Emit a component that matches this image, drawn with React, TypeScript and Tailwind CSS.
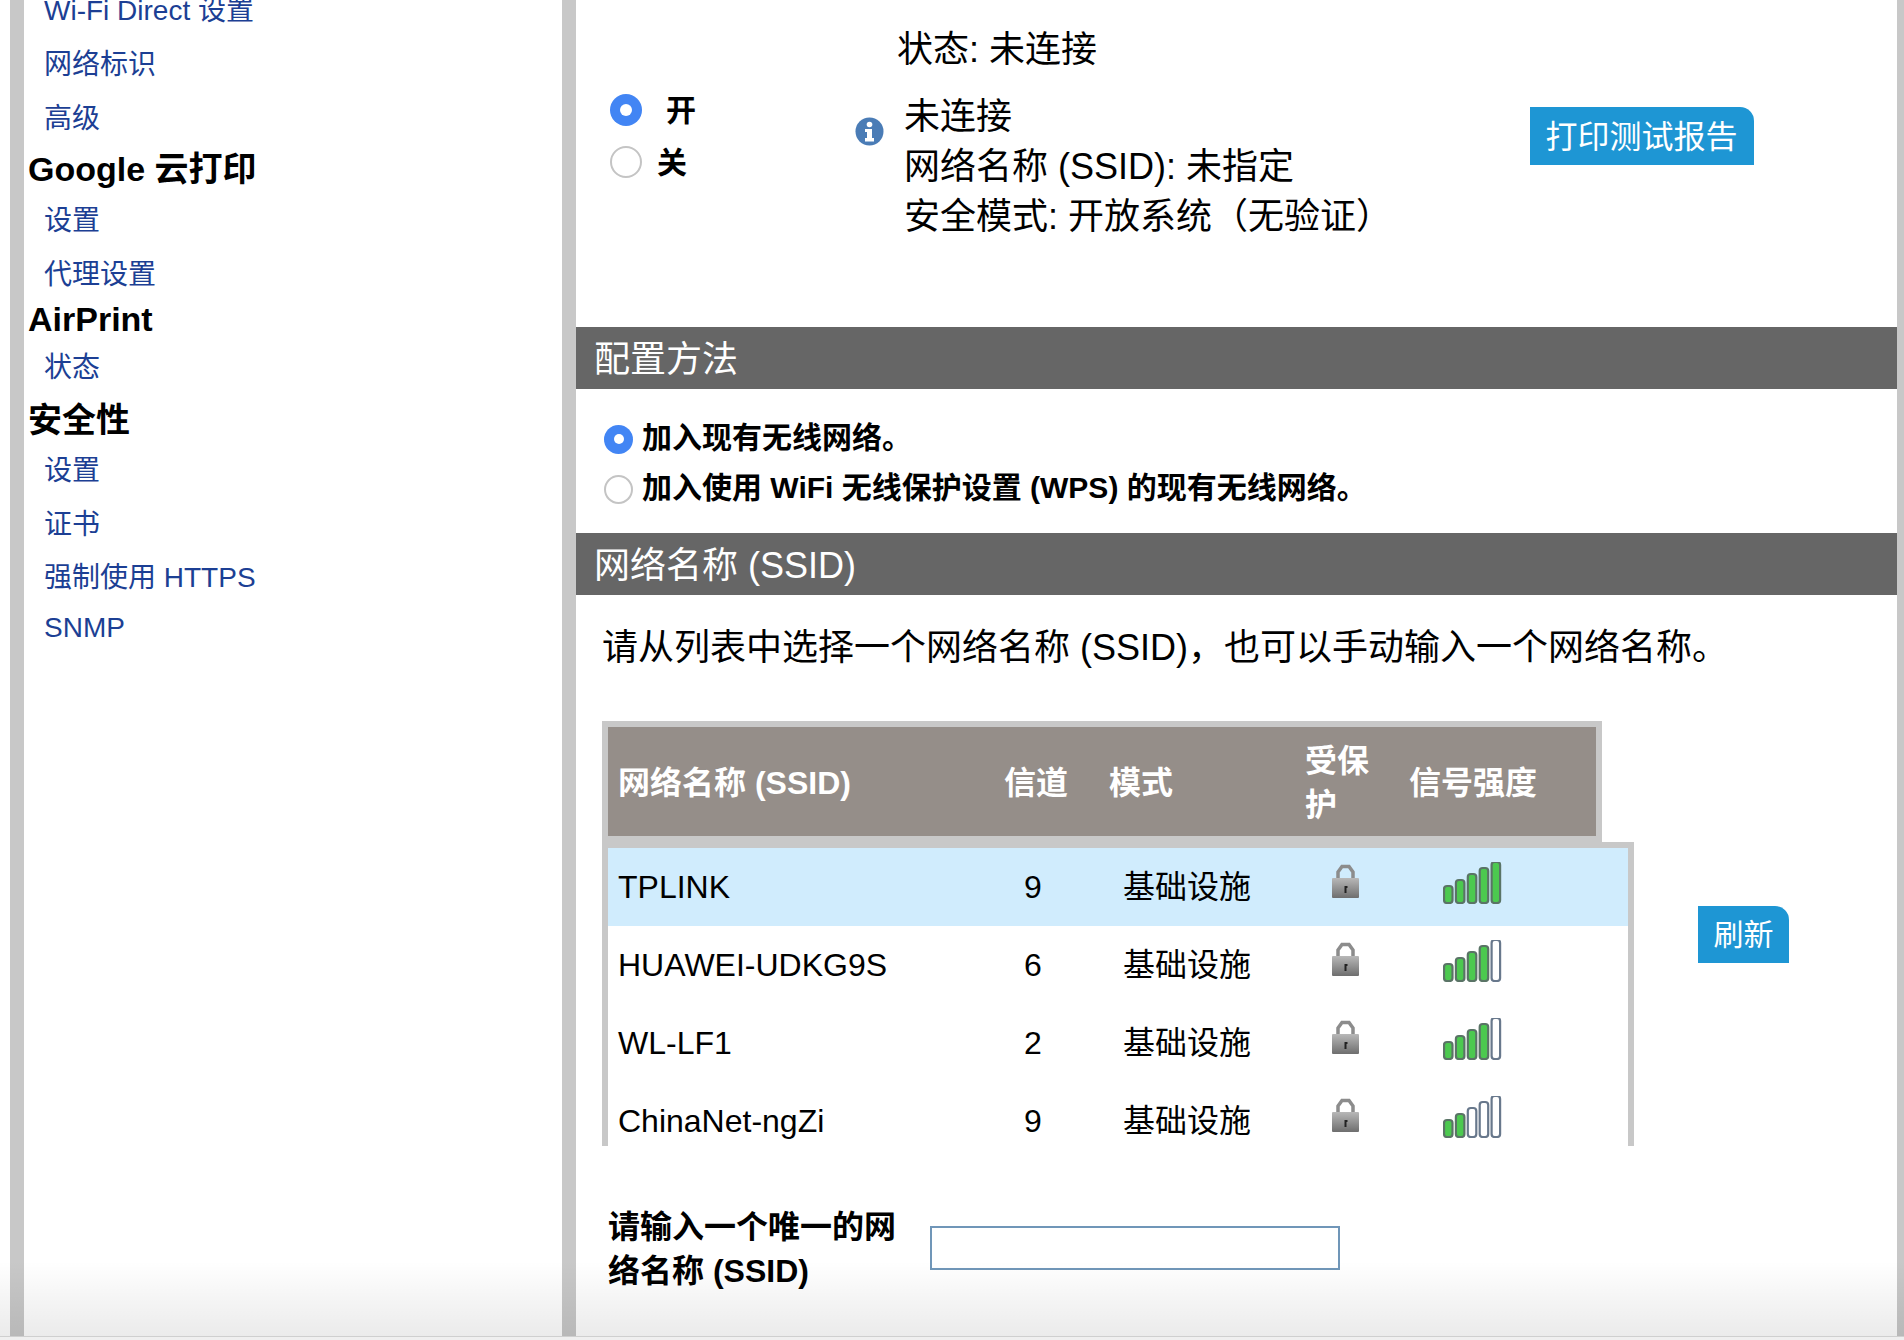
import type { ReactNode } from "react";

const sidebarRows: { label: string; kind: "link" | "head"; h: string }[] = [
  { label: "Wi-Fi Direct 设置", kind: "link", h: "h-[54px]" },
  { label: "网络标识", kind: "link", h: "h-[54px]" },
  { label: "高级", kind: "link", h: "h-[54px]" },
  { label: "Google 云打印", kind: "head", h: "h-[48px] pb-[2px]" },
  { label: "设置", kind: "link", h: "h-[54px]" },
  { label: "代理设置", kind: "link", h: "h-[53px]" },
  { label: "AirPrint", kind: "head", h: "h-[38px] pb-[2px]" },
  { label: "状态", kind: "link", h: "h-[58px]" },
  { label: "安全性", kind: "head", h: "h-[47px]" },
  { label: "设置", kind: "link", h: "h-[54px]" },
  { label: "证书", kind: "link", h: "h-[53px]" },
  { label: "强制使用 HTTPS", kind: "link", h: "h-[54px]" },
  { label: "SNMP", kind: "link", h: "h-[46px]" },
];

const networks = [
  { ssid: "TPLINK", channel: 9, level: 5 },
  { ssid: "HUAWEI-UDKG9S", channel: 6, level: 4 },
  { ssid: "WL-LF1", channel: 2, level: 4 },
  { ssid: "ChinaNet-ngZi", channel: 9, level: 2 },
];

function Radio({ on, size, dot }: { on: boolean; size: string; dot?: string }) {
  if (on) {
    return (
      <span className={`flex shrink-0 items-center justify-center rounded-full bg-[#4285f4] ${size}`}>
        <span className={`rounded-full bg-white ${dot ?? "h-[12px] w-[12px]"}`} />
      </span>
    );
  }
  return <span className={`block shrink-0 rounded-full border-2 border-[#c4c4c4] bg-white ${size}`} />;
}

function SectionBar({ children }: { children: ReactNode }) {
  return (
    <div className="flex h-[62px] items-center bg-[#666666] pl-[18px] pt-[3px] text-[36px] text-white">
      {children}
    </div>
  );
}

function InfoIcon() {
  return (
    <svg width="29" height="29" viewBox="0 0 29 29" className="mt-[25px] shrink-0">
      <circle cx="14.5" cy="14.5" r="14" fill="#4a7cb6" />
      <circle cx="14.5" cy="7.5" r="2.8" fill="#fff" />
      <path d="M10 12h7v9h2v3.500h-9V21h2v-6h-2z" fill="#fff" />
    </svg>
  );
}

function LockIcon() {
  return (
    <svg width="27" height="34" viewBox="0 0 27 34">
      <defs>
        <linearGradient id="lockBody" x1="0" y1="0" x2="0" y2="1">
          <stop offset="0" stopColor="#b8b8b8" />
          <stop offset="1" stopColor="#6e6e6e" />
        </linearGradient>
      </defs>
      <path d="M6 16V8l4-5.500h7L21 8v8" fill="none" stroke="#8c8c8c" strokeWidth="3.500" />
      <rect x="0" y="14" width="27" height="20" rx="1" fill="url(#lockBody)" />
      <path d="M12.500 22h3v2h-1v5h-2z" fill="#222" />
    </svg>
  );
}

function SignalIcon({ level }: { level: number }) {
  const bars = [17, 23, 29, 35, 41];
  return (
    <svg width="60" height="42" viewBox="0 0 60 42">
      {bars.map((h, i) => (
        <rect
          key={h}
          x={1 + i * 11.900}
          y={41 - h}
          width="8.500"
          height={h}
          rx="3"
          fill={i < level ? "#4cc94f" : "#ffffff"}
          stroke={i < level ? "#5a7466" : "#68788c"}
          strokeWidth="2.200"
        />
      ))}
    </svg>
  );
}

export default function App() {
  return (
    <div className="relative flex h-[1340px] overflow-hidden bg-white font-['Liberation_Sans','Noto_Sans_CJK_SC',sans-serif] text-black">
      <aside className="ml-[10px] w-[566px] shrink-0 border-x-[14px] border-[#c8c8c8]">
        <div className="-mt-[16px]">
          {sidebarRows.map((row, i) =>
            row.kind === "link" ? (
              <div key={i} className={`flex items-center pl-[20px] text-[28px] text-[#1c3f94] ${row.h}`}>
                {row.label}
              </div>
            ) : (
              <div key={i} className={`flex items-center pl-[4px] text-[34px] font-bold ${row.h}`}>
                {row.label}
              </div>
            ),
          )}
        </div>
      </aside>

      <main className="min-w-0 flex-1 border-r-[7px] border-[#c8c8c8]">
        <div className="flex h-[327px]">
          <div className="w-[279px] shrink-0 pl-[34px] pt-[94px]">
            <div className="flex h-[32px] items-center text-[30px] font-bold">
              <Radio on size="h-[32px] w-[32px]" />
              <span className="ml-[24px] mt-[1px]">开</span>
            </div>
            <div className="mt-[20px] flex h-[32px] items-center text-[30px] font-bold">
              <Radio on={false} size="h-[32px] w-[32px]" />
              <span className="ml-[15px] mt-[1px]">关</span>
            </div>
          </div>
          <div className="w-[675px] shrink-0 pt-[25px] text-[36px] leading-[50px]">
            <div className="mb-[17px] ml-[42px] h-[50px]">状态: 未连接</div>
            <div className="flex gap-[20px]">
              <InfoIcon />
              <div>
                <div>未连接</div>
                <div>网络名称 (SSID): 未指定</div>
                <div>安全模式: 开放系统（无验证）</div>
              </div>
            </div>
          </div>
          <button
            type="button"
            className="mt-[107px] flex h-[58px] w-[224px] items-center justify-center rounded-tr-[14px] bg-[#1e96d4] pr-[1px] pt-[2px] text-[32px] text-white"
          >
            打印测试报告
          </button>
        </div>

        <SectionBar>配置方法</SectionBar>
        <div className="h-[144px] pl-[28px] pt-[23px] text-[30px] font-bold">
          <div className="flex h-[50px] items-center gap-[9px]">
            <span className="mt-[4px]">
              <Radio on size="h-[29px] w-[29px]" dot="h-[10px] w-[10px]" />
            </span>
            <span>加入现有无线网络。</span>
          </div>
          <div className="flex h-[50px] items-center gap-[9px]">
            <span className="mt-[4px]">
              <Radio on={false} size="h-[29px] w-[29px]" />
            </span>
            <span>加入使用 WiFi 无线保护设置 (WPS) 的现有无线网络。</span>
          </div>
        </div>

        <SectionBar>网络名称 (SSID)</SectionBar>
        <p className="ml-[26px] mt-[28px] whitespace-nowrap text-[36px] leading-[50px]">
          请从列表中选择一个网络名称 (SSID)，也可以手动输入一个网络名称。
        </p>

        <div className="ml-[26px] mt-[48px]">
          <div className="flex h-[121px] w-[1000px] items-center border-[6px] border-[#c8c8c8] bg-[#958e89] pt-[3px] text-[32px] font-bold leading-[44px] text-white">
            <div className="w-[388px] shrink-0 pl-[10px]">网络名称 (SSID)</div>
            <div className="w-[105px] shrink-0 pl-[8px]">信道</div>
            <div className="w-[196px] shrink-0 pl-[8px]">模式</div>
            <div className="w-[105px] shrink-0 pl-[8px]">
              <div className="w-[70px]">受保护</div>
            </div>
            <div className="pl-[7px]">信号强度</div>
          </div>

          <div className="h-[304px] w-[1032px] overflow-hidden border-x-[6px] border-t-[6px] border-[#c8c8c8]">
            {networks.map((n, i) => (
              <div
                key={n.ssid}
                className={`flex h-[78px] items-center text-[32px] ${i === 0 ? "bg-[#d0ecfd]" : "bg-white"}`}
              >
                <div className="w-[388px] shrink-0 pl-[10px]">{n.ssid}</div>
                <div className="w-[74px] shrink-0 text-center">{n.channel}</div>
                <div className="w-[262px] shrink-0 pl-[53px]">基础设施</div>
                <div className="-mt-[12px] flex w-[27px] shrink-0">
                  <LockIcon />
                </div>
                <div className="-mt-[8px] ml-[84px]">
                  <SignalIcon level={n.level} />
                </div>
              </div>
            ))}
          </div>
        </div>

        <div className="ml-[32px] mt-[59px] flex">
          <div className="w-[292px] text-[32px] font-bold leading-[44px]">
            请输入一个唯一的网络名称 (SSID)
          </div>
          <input
            type="text"
            aria-label="网络名称"
            className="ml-[30px] mt-[21px] h-[44px] w-[410px] border-2 border-[#7096b8] bg-white"
          />
        </div>
      </main>

      <button
        type="button"
        className="absolute left-[1698px] top-[906px] flex h-[57px] w-[91px] items-center justify-center rounded-tr-[14px] bg-[#1e96d4] text-[30px] text-white"
      >
        刷新
      </button>

      <div className="pointer-events-none absolute inset-x-0 bottom-[3px] h-[76px] bg-gradient-to-b from-transparent to-black/[0.08]" />
      <div className="pointer-events-none absolute inset-x-0 bottom-0 h-[4px] border-t border-[#cfcfcf] bg-[#efefef]" />
    </div>
  );
}
